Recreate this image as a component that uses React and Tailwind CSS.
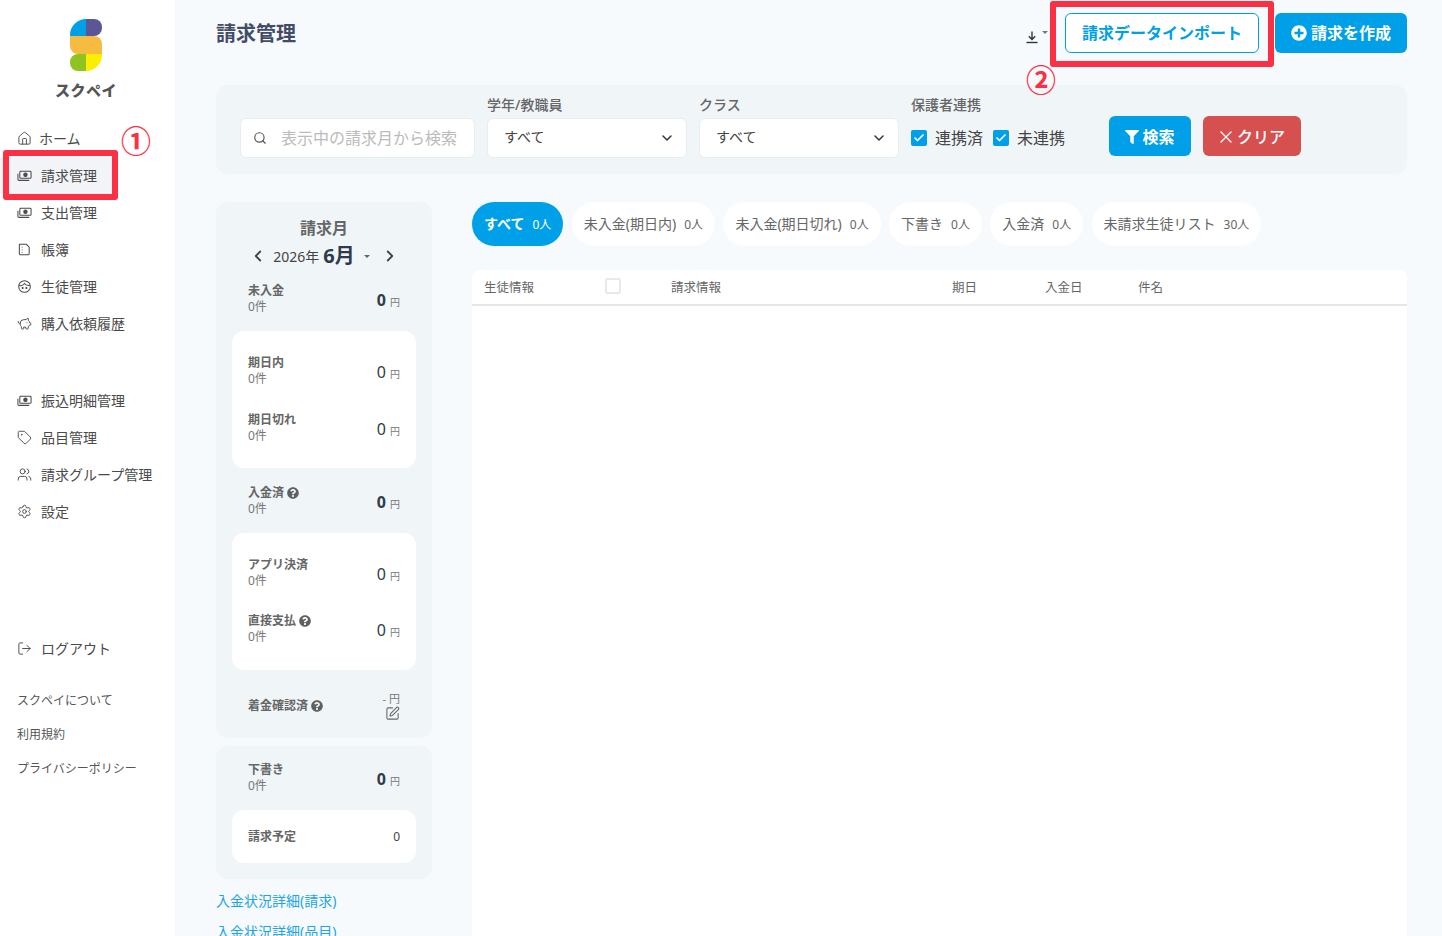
import React from "react";
import {
  ChevronDown,
  ChevronLeft,
  ChevronRight,
  Check,
  Home,
  PiggyBank,
  Search,
  Settings,
  SquarePen,
  Tag,
  Users,
  LogOut,
  X,
} from "lucide-react";
import { FaFilter, FaPlusCircle, FaQuestionCircle } from "react-icons/fa";

const MoneyIcon = () => (
  <svg viewBox="0 0 16 16" className="w-[15px] h-[15px]" fill="none" stroke="currentColor" strokeWidth="1.1">
    <rect x="3" y="3.5" width="12" height="7.5" rx="1" />
    <circle cx="9" cy="7.2" r="1.8" fill="currentColor" />
    <path d="M1 6v6a1.2 1.2 0 0 0 1.2 1.2H13" />
  </svg>
);

const BookIcon = () => (
  <svg viewBox="0 0 16 16" className="w-[15px] h-[15px]" fill="none" stroke="currentColor" strokeWidth="1.1">
    <path d="M3 2.5h7l3 3v7a1 1 0 0 1-1 1H3.5a1 1 0 0 1-1-1v-9.5a.5.5 0 0 1 .5-.5z" />
    <path d="M5.5 5v.8M5.5 8v.8M5.5 11v.8" />
  </svg>
);

const FaceIcon = () => (
  <svg viewBox="0 0 16 16" className="w-[15px] h-[15px]" fill="none" stroke="currentColor" strokeWidth="1.1">
    <circle cx="8" cy="8" r="6.2" />
    <path d="M2.2 7c2 .4 4.5-.2 5.8-2.2 1.2 1.6 3.4 2.4 5.8 2.2" />
    <circle cx="6" cy="9.6" r=".6" fill="currentColor" />
    <circle cx="10" cy="9.6" r=".6" fill="currentColor" />
  </svg>
);

const DownloadIcon = () => (
  <svg viewBox="0 0 14 14" className="w-[14px] h-[14px]" fill="none" stroke="#333" strokeWidth="1.4">
    <path d="M7 1.5v7.5M3.8 6.2 7 9.4l3.2-3.2" />
    <path d="M1.5 12.5h11" />
  </svg>
);

const Logo = () => (
  <svg viewBox="0 0 32 52" className="w-8 h-[52px]">
    <path d="M16 0v17H0v-1A16 16 0 0 1 16 0z" fill="#00a0e9" />
    <path d="M16 0h8a8 8 0 0 1 8 8v1a8 8 0 0 1-8 8h-8z" fill="#5b5796" />
    <path d="M0 17h24a8 8 0 0 1 8 8v10H8a8 8 0 0 1-8-8z" fill="#f5bc41" />
    <path d="M16 35H8a8 8 0 0 0-8 8v1a8 8 0 0 0 8 8h8z" fill="#8fc31f" />
    <path d="M16 35h16v1a16 16 0 0 1-16 16z" fill="#fbee00" />
  </svg>
);

const NavItem = ({ icon, label, active, tight }) => (
  <div
    className={`flex items-center h-[37px] pl-[17px] gap-[9px] text-[14px] text-[#4a4a4a] ${
      active ? "w-[112px] bg-[#f3f4f7]" : ""
    }`}
  >
    <span className="w-[15px] flex justify-center text-[#4a4a4a]">{icon}</span>
    <span className={tight ? "-ml-[2px]" : ""}>{label}</span>
  </div>
);

const Help = () => <FaQuestionCircle className="w-3 h-3 text-[#606060]" />;

const Stat = ({ label, help, bold, className = "" }) => (
  <div className={`flex items-center justify-between h-10 ${className}`}>
    <div>
      <div className="flex items-center gap-[3px] text-[12px] leading-4 font-bold text-[#666]">
        {label}
        {help && <Help />}
      </div>
      <div className="text-[12px] leading-4 text-[#777]">0件</div>
    </div>
    <div className="flex items-baseline gap-[4px] mt-[2px]">
      <span className={`text-[16px] text-[#2f3a4a] ${bold ? "font-bold" : ""}`}>0</span>
      <span className="text-[10px] text-[#777]">円</span>
    </div>
  </div>
);

const Tab = ({ label, count, active }) => (
  <div
    className={`flex items-center h-11 px-3 gap-2 rounded-full text-[14px] ${
      active ? "bg-[#00a0e9] text-white font-bold" : "bg-white text-[#666]"
    }`}
  >
    <span className="mb-[2px]">{label}</span>
    <span className="mt-[1px] text-[12px] font-normal">{count}</span>
  </div>
);

const Select = ({ label }) => (
  <div className="w-[200px]">
    <div className="text-[14px] leading-[28px] h-[27px] font-medium text-[#666]">{label}</div>
    <div className="flex items-center justify-between h-10 pl-[16px] pr-[11px] bg-white rounded-md border border-[#e8edf2] text-[14px] text-[#444]">
      <span className="mb-[3px]">すべて</span>
      <ChevronDown className="w-4 h-4 text-[#333]" strokeWidth={2.2} />
    </div>
  </div>
);

const CheckItem = ({ label }) => (
  <div className="flex items-center gap-2 text-[16px] text-[#444]">
    <span className="flex items-center justify-center w-4 h-4 rounded-[2px] bg-[#00a0e9]">
      <Check className="w-3 h-3 text-white" strokeWidth={3.5} />
    </span>
    {label}
  </div>
);

export default function App() {
  return (
    <div
      className="relative flex h-[936px] overflow-hidden bg-[#f6fafd]"
      style={{ fontFamily: '"Noto Sans", "Noto Sans CJK JP", sans-serif' }}
    >
      {/* Sidebar */}
      <aside className="w-[175px] shrink-0 bg-white">
        <div className="flex flex-col items-center pt-[19px] pr-[3px] h-[120px]">
          <Logo />
          <div className="mt-[7px] text-[15px] leading-6 font-black tracking-[0.5px] text-[#555]">スクペイ</div>
        </div>
        <nav>
          <NavItem icon={<Home className="w-[15px] h-[15px]" strokeWidth={1.5} />} label="ホーム" tight />
          <NavItem icon={<MoneyIcon />} label="請求管理" active />
          <NavItem icon={<MoneyIcon />} label="支出管理" />
          <NavItem icon={<BookIcon />} label="帳簿" />
          <NavItem icon={<FaceIcon />} label="生徒管理" />
          <NavItem icon={<PiggyBank className="w-4 h-4" strokeWidth={1.5} />} label="購入依頼履歴" />
          <div className="h-[40px]" />
          <NavItem icon={<MoneyIcon />} label="振込明細管理" />
          <NavItem icon={<Tag className="w-[15px] h-[15px]" strokeWidth={1.5} />} label="品目管理" />
          <NavItem icon={<Users className="w-[15px] h-[15px]" strokeWidth={1.5} />} label="請求グループ管理" />
          <NavItem icon={<Settings className="w-[15px] h-[15px]" strokeWidth={1.5} />} label="設定" />
          <div className="h-[100px]" />
          <NavItem icon={<LogOut className="w-[15px] h-[15px]" strokeWidth={1.5} />} label="ログアウト" />
        </nav>
        <div className="mt-[17px] pl-[17px] flex flex-col text-[12px] text-[#555]">
          <div className="h-[34px] flex items-center">スクペイについて</div>
          <div className="h-[34px] flex items-center">利用規約</div>
          <div className="h-[34px] flex items-center">プライバシーポリシー</div>
        </div>
      </aside>

      {/* Main */}
      <main className="flex-1 min-w-0 pl-[41px] pr-[35px]">
        <header className="flex items-center justify-between h-[66px]">
          <h1 className="mt-[1px] text-[20px] font-bold text-[#434c66]">請求管理</h1>
          <div className="flex items-center gap-4">
            <div className="flex items-start gap-[3px] mt-2 mr-[1px]">
              <DownloadIcon />
              <span className="mt-[1px] w-0 h-0 border-x-[3px] border-x-transparent border-t-[3px] border-t-[#777]" />
            </div>
            <div className="flex items-center justify-center w-[194px] h-10 rounded-md bg-white border border-[#00a0e9] text-[16px] font-bold text-[#00a0e9]">
              請求データインポート
            </div>
            <div className="flex items-center justify-center gap-[4px] w-[132px] h-10 rounded-md bg-[#00a0e9] text-[16px] font-bold text-white">
              <FaPlusCircle className="w-4 h-4" />
              請求を作成
            </div>
          </div>
        </header>

        {/* Filters */}
        <section className="flex items-end h-[89px] mt-[19px] pb-[16px] pl-6 rounded-xl bg-[#f0f5f8]">
          <div className="flex items-center w-[235px] h-10 pl-[12px] gap-[14px] bg-white rounded-md border border-[#e8edf2] text-[16px] text-[#bbb]">
            <Search className="w-[14px] h-[14px] text-[#555]" strokeWidth={2} />
            表示中の請求月から検索
          </div>
          <div className="ml-3">
            <Select label="学年/教職員" />
          </div>
          <div className="ml-3">
            <Select label="クラス" />
          </div>
          <div className="ml-3 w-[198px]">
            <div className="text-[14px] leading-[28px] h-[27px] font-medium text-[#666]">保護者連携</div>
            <div className="flex items-center h-10 gap-[10px]">
              <CheckItem label="連携済" />
              <CheckItem label="未連携" />
            </div>
          </div>
          <div className="flex items-center justify-center gap-[3px] w-[82px] h-10 mb-[2px] pt-[1px] rounded-md bg-[#00a0e9] text-[16px] font-bold text-white">
            <FaFilter className="w-[14px] h-[14px]" />
            検索
          </div>
          <div className="flex items-center justify-center gap-[1px] w-[98px] h-10 mb-[2px] ml-3 pt-[1px] pr-[3px] rounded-md bg-[#d65050] text-[16px] font-medium text-white">
            <X className="w-5 h-5" strokeWidth={1.5} />
            クリア
          </div>
        </section>

        <div className="flex gap-10 mt-7">
          {/* Summary column */}
          <div className="w-[216px] shrink-0">
            <section className="h-[536px] rounded-xl bg-[#f0f5f8]">
              <div className="pt-[14px] h-[40px] text-center text-[16px] leading-6 font-bold text-[#666]">請求月</div>
              <div className="flex items-center justify-between h-7 pl-[33px] pr-[33px] text-[#444]">
                <ChevronLeft className="w-[18px] h-[18px]" strokeWidth={2.4} />
                <div className="flex items-center -ml-[5px]">
                  <span className="text-[14px]">2026年</span>
                  <span className="ml-1 text-[20px] font-bold text-[#2f3a4a]">6月</span>
                  <span className="ml-[9px] w-0 h-0 border-x-[3px] border-x-transparent border-t-[3px] border-t-[#666]" />
                </div>
                <ChevronRight className="w-[18px] h-[18px]" strokeWidth={2.4} />
              </div>
              <Stat label="未入金" bold className="px-8 mt-[9px]" />
              <div className="flex flex-col gap-[17px] h-[137px] mt-[12px] mx-4 px-4 py-5 rounded-xl bg-white">
                <Stat label="期日内" />
                <Stat label="期日切れ" />
              </div>
              <Stat label="入金済" help bold className="px-8 mt-[13px]" />
              <div className="flex flex-col gap-4 h-[137px] mt-[12px] mx-4 px-4 py-5 rounded-xl bg-white">
                <Stat label="アプリ決済" />
                <Stat label="直接支払" help />
              </div>
              <div className="flex items-center justify-between h-10 px-8 mt-[16px]">
                <div className="flex items-center gap-[3px] text-[12px] font-bold text-[#666]">
                  着金確認済
                  <Help />
                </div>
                <div className="flex flex-col items-end text-[11px] leading-[15px] text-[#777]">
                  <span>- 円</span>
                  <SquarePen className="w-[15px] h-[15px] text-[#666]" strokeWidth={1.7} />
                </div>
              </div>
            </section>
            <section className="h-[133px] mt-2 pt-[12px] rounded-xl bg-[#f0f5f8]">
              <Stat label="下書き" bold className="px-8" />
              <div className="flex items-center justify-between h-[53px] mt-3 mx-4 px-4 rounded-xl bg-white">
                <span className="text-[12px] font-bold text-[#666]">請求予定</span>
                <span className="text-[12px] text-[#444]">0</span>
              </div>
            </section>
            <div className="mt-[6px] text-[14px] leading-[31px] text-[#1ea5e6]">
              <div>入金状況詳細(請求)</div>
              <div>入金状況詳細(品目)</div>
            </div>
          </div>

          {/* Table column */}
          <div className="flex-1 min-w-0">
            <div className="flex gap-[8.4px]">
              <Tab label="すべて" count="0人" active />
              <Tab label="未入金(期日内)" count="0人" />
              <Tab label="未入金(期日切れ)" count="0人" />
              <Tab label="下書き" count="0人" />
              <Tab label="入金済" count="0人" />
              <Tab label="未請求生徒リスト" count="30人" />
            </div>
            <div className="mt-6 h-[700px] rounded-t-lg bg-white">
              <div className="flex items-center h-[36px] pt-[2px] border-b-2 border-[#e4e6e8] text-[12.5px] text-[#666]">
                <span className="w-[133px] pl-[12px]">生徒情報</span>
                <span className="w-[66px]">
                  <span className="block w-4 h-4 mb-[5px] rounded-[2px] border-2 border-[#e6eaf0]" />
                </span>
                <span className="w-[281px]">請求情報</span>
                <span className="w-[93px]">期日</span>
                <span className="w-[93px]">入金日</span>
                <span>件名</span>
              </div>
            </div>
          </div>
        </div>
      </main>

      {/* Annotations drawn over the screenshot */}
      <div className="absolute left-[3px] top-[150px] w-[115px] h-[50px] rounded-[3px] border-[6px] border-[#fc3045]" />
      <div className="absolute left-[121px] top-[121px] text-[30px] leading-10 font-bold text-[#fc3045]">①</div>
      <div className="absolute left-[1050px] top-[1px] w-[224px] h-[66px] rounded-[3px] border-[6px] border-[#fc3045]" />
      <div className="absolute left-[1026px] top-[60px] text-[30px] leading-10 font-bold text-[#fc3045]">②</div>
    </div>
  );
}
